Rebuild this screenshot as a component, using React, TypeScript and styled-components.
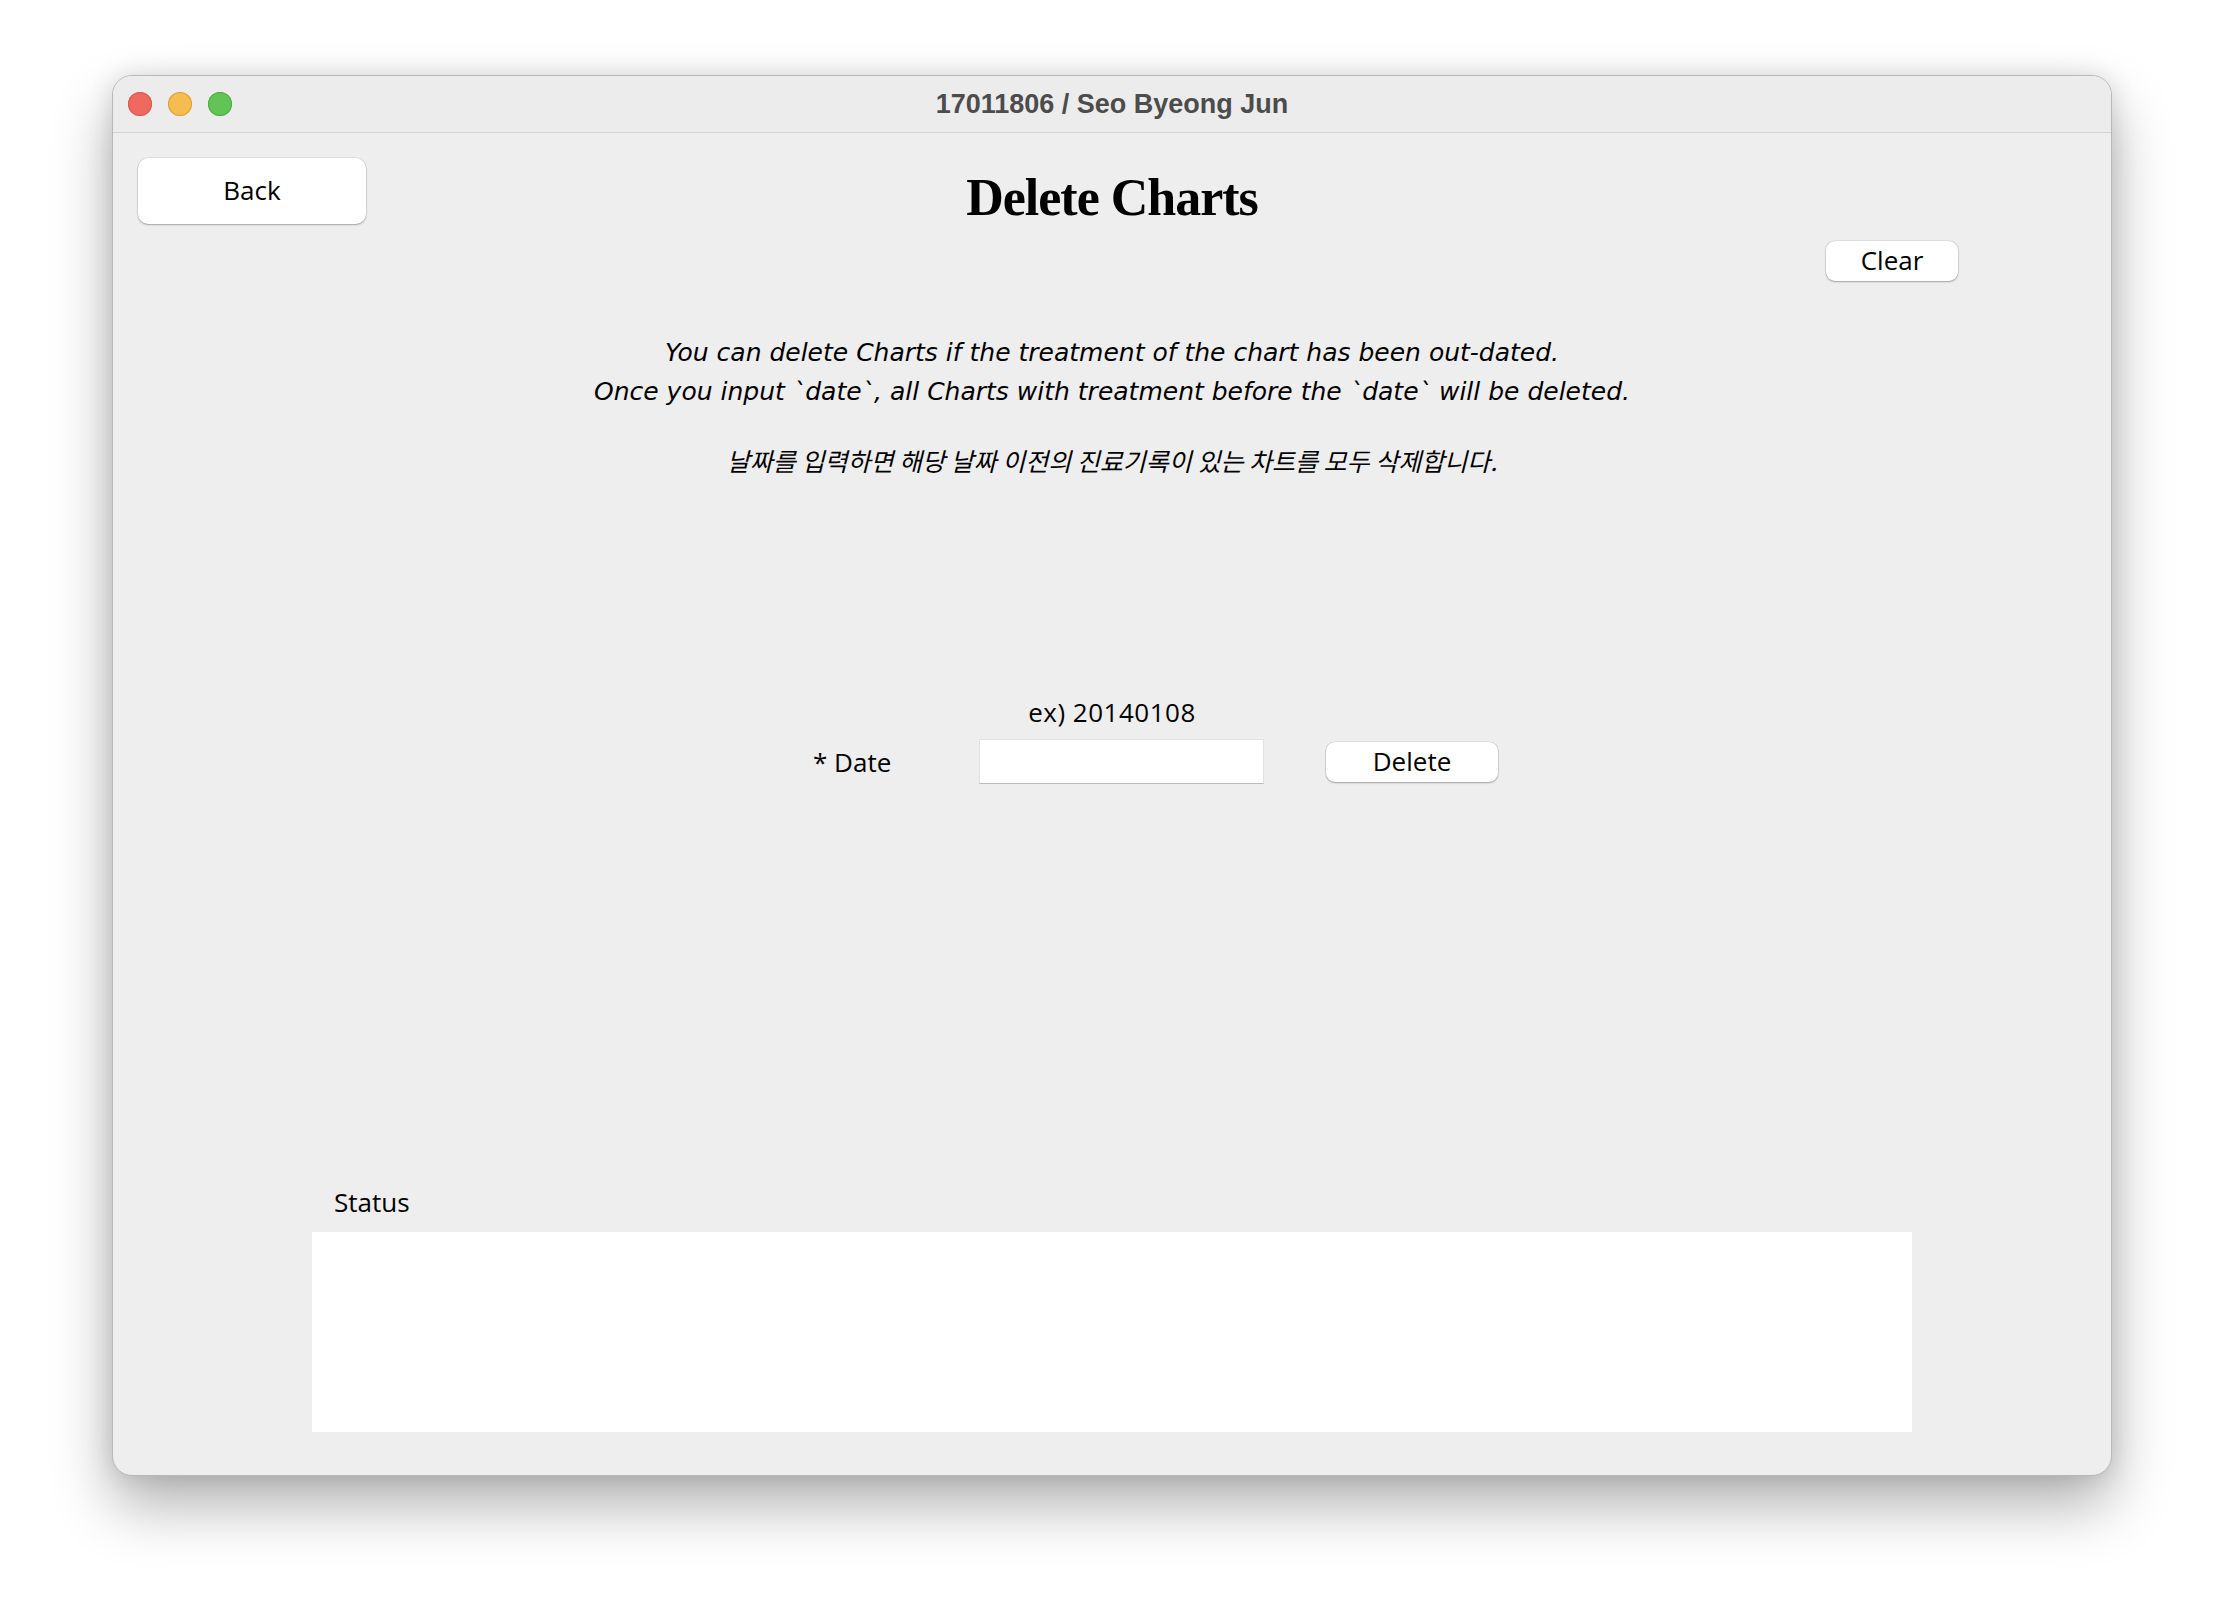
import React from "react";
import styled, { createGlobalStyle } from "styled-components";

const GlobalStyle = createGlobalStyle`
  html, body {
    margin: 0;
    padding: 0;
    background: #ffffff;
  }
  body {
    font-family: "Open Sans", "Noto Sans", sans-serif;
    color: #000;
  }
  * { box-sizing: border-box; }
`;

const Page = styled.div`
  width: 2224px;
  height: 1624px;
  padding: 75px 0 0 112px;
  background: #ffffff;
`;

const Window = styled.div`
  width: 2000px;
  height: 1401px;
  border: 1px solid #b8b8b8;
  border-radius: 20px;
  background: #eeeeee;
  overflow: hidden;
  display: flex;
  flex-direction: column;
  box-shadow: 0 30px 60px rgba(0, 0, 0, 0.3), 0 0 24px rgba(0, 0, 0, 0.12);
`;

const TitleBar = styled.div`
  height: 57px;
  flex: none;
  background: #ececec;
  border-bottom: 1px solid #d2d2d2;
  display: grid;
  grid-template-columns: 1fr auto 1fr;
  align-items: center;
  padding-left: 15px;
`;

const Lights = styled.div`
  display: flex;
  gap: 16px;
  align-items: center;
`;

const Light = styled.span<{ $fill: string; $edge: string }>`
  width: 24px;
  height: 24px;
  border-radius: 50%;
  background: ${(p) => p.$fill};
  box-shadow: inset 0 0 0 1px ${(p) => p.$edge};
`;

const WindowTitle = styled.div`
  font-family: "Liberation Sans", Arial, sans-serif;
  font-weight: 700;
  font-size: 27px;
  color: #4c4c4c;
  line-height: 32px;
  margin-left: -15px;
`;

const Content = styled.div`
  flex: 1;
  display: flex;
  flex-direction: column;
  padding: 25px 25px 43px 25px;
`;

const HeaderRow = styled.div`
  display: grid;
  grid-template-columns: 1fr auto 1fr;
  align-items: start;
  height: 66px;
`;

const Button = styled.button<{ $w: number; $h: number; $r?: number }>`
  width: ${(p) => p.$w}px;
  height: ${(p) => p.$h}px;
  border: none;
  border-radius: ${(p) => p.$r ?? 9}px;
  background: #ffffff;
  box-shadow: 0 1px 2px rgba(0, 0, 0, 0.28), 0 0 0 0.5px rgba(0, 0, 0, 0.12);
  font-family: "Open Sans", "Noto Sans", sans-serif;
  font-size: 26px;
  line-height: 1;
  color: #000;
  display: flex;
  align-items: center;
  justify-content: center;
  padding: 0;
  padding-bottom: 2px;
`;

const Title = styled.h1`
  margin: 10px 0 0 0;
  font-family: "Liberation Serif", "Times New Roman", serif;
  font-weight: 700;
  font-size: 52px;
  letter-spacing: -1px;
  line-height: 60px;
  color: #000;
`;

const ClearRow = styled.div`
  display: flex;
  justify-content: flex-end;
  padding-right: 128px;
  margin-top: 17px;
`;

const Notice = styled.p`
  margin: 52px 0 0 0;
  text-align: center;
  font-family: "DejaVu Sans", "Noto Sans", sans-serif;
  font-style: italic;
  font-size: 25px;
  line-height: 39px;
  color: #000;
`;

const KoreanNotice = styled.p`
  margin: 33px 0 0 0;
  text-align: center;
  font-family: "Noto Sans CJK KR", "Noto Sans", sans-serif;
  font-style: italic;
  font-size: 25px;
  line-height: 32px;
  color: #000;
`;

const Example = styled.div`
  margin-top: 220px;
  text-align: center;
  font-size: 26px;
  line-height: 32px;
  letter-spacing: 0.5px;
`;

const DateRow = styled.div`
  margin-top: 11px;
  display: flex;
  justify-content: center;
  align-items: center;
  padding-left: 87px;
  height: 45px;
`;

const FieldLabel = styled.label`
  width: 166px;
  font-size: 26px;
  line-height: 32px;
`;

const DateInput = styled.input`
  width: 285px;
  height: 45px;
  margin-right: 62px;
  border: 1px solid #e2e2e2;
  border-bottom: 1.5px solid #bcbcbc;
  background: #ffffff;
  outline: none;
  font-size: 26px;
  padding: 0 8px;
`;

const StatusSection = styled.div`
  margin-top: auto;
  align-self: center;
  width: 1600px;
  display: flex;
  flex-direction: column;
`;

const StatusLabel = styled.div`
  padding-left: 22px;
  font-size: 26px;
  line-height: 32px;
`;

const StatusBox = styled.div`
  margin-top: 14px;
  height: 200px;
  background: #ffffff;
`;

export default function App() {
  return (
    <>
      <GlobalStyle />
      <Page>
        <Window>
          <TitleBar>
            <Lights>
              <Light $fill="#ee6a5f" $edge="#d85a50" />
              <Light $fill="#f5bd4f" $edge="#d9a33c" />
              <Light $fill="#61c454" $edge="#4fab44" />
            </Lights>
            <WindowTitle>17011806 / Seo Byeong Jun</WindowTitle>
            <span />
          </TitleBar>
          <Content>
            <HeaderRow>
              <Button $w={228} $h={66} $r={10}>Back</Button>
              <Title>Delete Charts</Title>
              <span />
            </HeaderRow>
            <ClearRow>
              <Button $w={132} $h={40}>Clear</Button>
            </ClearRow>
            <Notice>
              You can delete Charts if the treatment of the chart has been out-dated.
              <br />
              Once you input `date`, all Charts with treatment before the `date` will be deleted.
            </Notice>
            <KoreanNotice>
              날짜를 입력하면 해당 날짜 이전의 진료기록이 있는 차트를 모두 삭제합니다.
            </KoreanNotice>
            <Example>ex) 20140108</Example>
            <DateRow>
              <FieldLabel>* Date</FieldLabel>
              <DateInput type="text" />
              <Button $w={172} $h={40}>Delete</Button>
            </DateRow>
            <StatusSection>
              <StatusLabel>Status</StatusLabel>
              <StatusBox />
            </StatusSection>
          </Content>
        </Window>
      </Page>
    </>
  );
}
